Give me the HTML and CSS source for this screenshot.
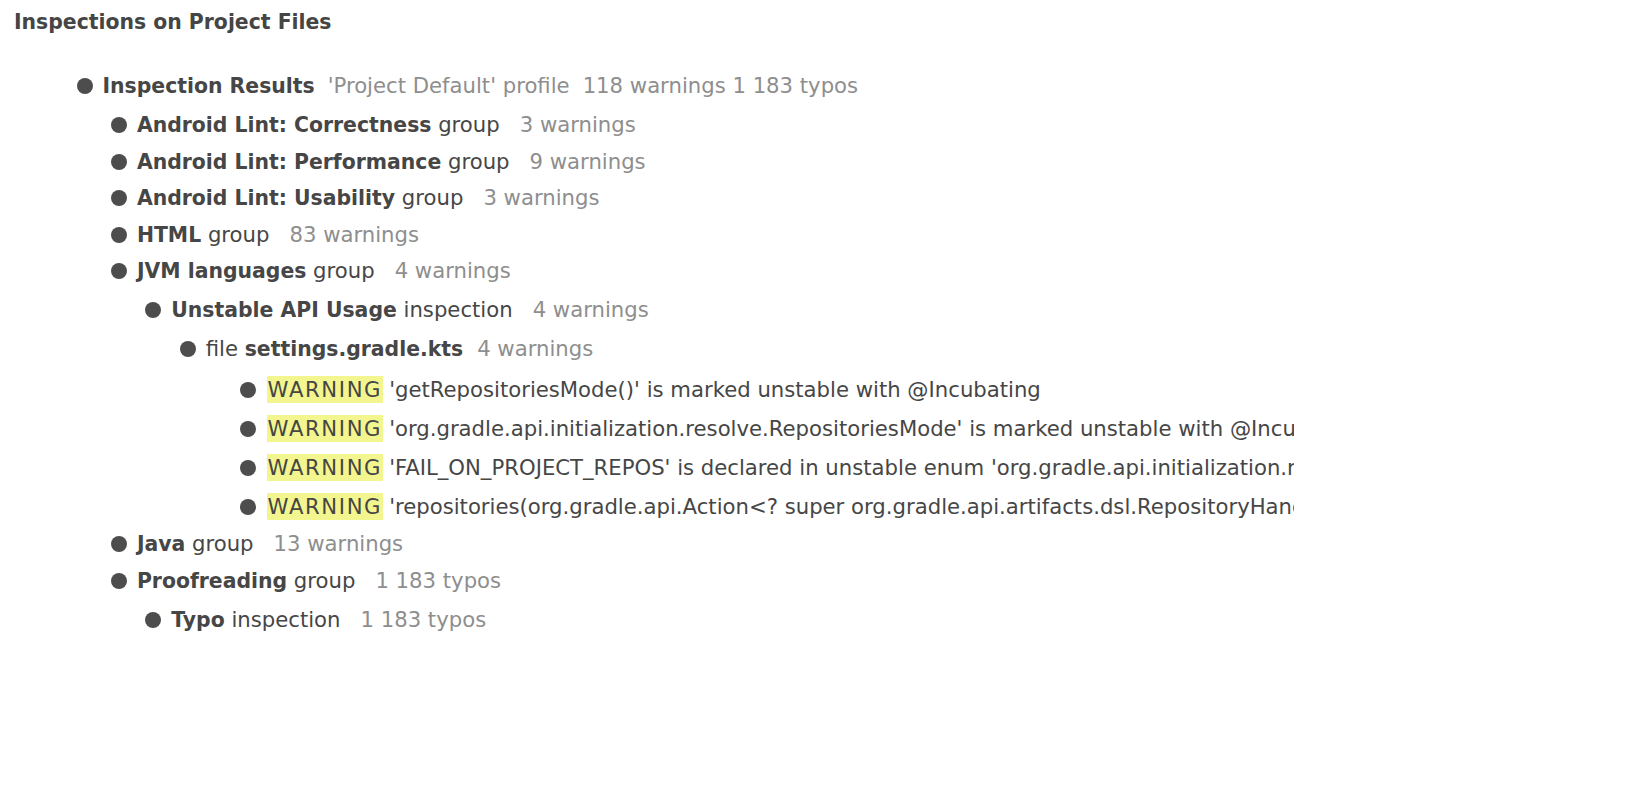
FILE: index.html
```html
<!DOCTYPE html>
<html lang="en">
<head>
<meta charset="utf-8">
<title>Inspections on Project Files</title>
<link rel="stylesheet" href="styles.css">
</head>
<body>
<h1 class="title">Inspections on Project Files</h1>
<ul class="tree">
  <li>
    <div class="row"><span class="dot"></span><span class="name strong">Inspection Results</span><span class="meta meta-root">'Project Default' profile</span><span class="meta meta-root">118 warnings 1 183 typos</span></div>
    <ul class="sub">
      <li><div class="row"><span class="dot"></span><span class="name"><span class="strong">Android Lint: Correctness</span> group</span><span class="meta">3 warnings</span></div></li>
      <li><div class="row"><span class="dot"></span><span class="name"><span class="strong">Android Lint: Performance</span> group</span><span class="meta">9 warnings</span></div></li>
      <li><div class="row"><span class="dot"></span><span class="name"><span class="strong">Android Lint: Usability</span> group</span><span class="meta">3 warnings</span></div></li>
      <li><div class="row"><span class="dot"></span><span class="name"><span class="strong">HTML</span> group</span><span class="meta">83 warnings</span></div></li>
      <li>
        <div class="row"><span class="dot"></span><span class="name"><span class="strong">JVM languages</span> group</span><span class="meta">4 warnings</span></div>
        <ul class="sub">
          <li>
            <div class="row"><span class="dot"></span><span class="name"><span class="strong">Unstable API Usage</span> inspection</span><span class="meta">4 warnings</span></div>
            <ul class="sub">
              <li>
                <div class="row"><span class="dot"></span><span class="name">file <span class="strong">settings.gradle.kts</span></span><span class="meta meta-file">4 warnings</span></div>
                <ul class="sub sub-warn">
                  <li><div class="row row-warn"><span class="dot dot-warn"></span><span class="level">WARNING</span><span class="msg">'getRepositoriesMode()' is marked unstable with @Incubating</span></div></li>
                  <li><div class="row row-warn"><span class="dot dot-warn"></span><span class="level">WARNING</span><span class="msg">'org.gradle.api.initialization.resolve.RepositoriesMode' is marked unstable with @Incubating</span></div></li>
                  <li><div class="row row-warn"><span class="dot dot-warn"></span><span class="level">WARNING</span><span class="msg">'FAIL_ON_PROJECT_REPOS' is declared in unstable enum 'org.gradle.api.initialization.resolve.RepositoriesMode' marked with @Incubating</span></div></li>
                  <li><div class="row row-warn"><span class="dot dot-warn"></span><span class="level">WARNING</span><span class="msg">'repositories(org.gradle.api.Action&lt;? super org.gradle.api.artifacts.dsl.RepositoryHandler&gt;)' is marked unstable with @Incubating</span></div></li>
                </ul>
              </li>
            </ul>
          </li>
        </ul>
      </li>
      <li><div class="row"><span class="dot"></span><span class="name"><span class="strong">Java</span> group</span><span class="meta">13 warnings</span></div></li>
      <li>
        <div class="row"><span class="dot"></span><span class="name"><span class="strong">Proofreading</span> group</span><span class="meta">1 183 typos</span></div>
        <ul class="sub">
          <li><div class="row"><span class="dot"></span><span class="name"><span class="strong">Typo</span> inspection</span><span class="meta">1 183 typos</span></div></li>
        </ul>
      </li>
    </ul>
  </li>
</ul>
</body>
</html>
```
FILE: styles.css
```css
html, body {
  margin: 0;
  padding: 0;
  background: #ffffff;
}

body {
  font-family: "DejaVu Sans", "Liberation Sans", sans-serif;
  font-size: 21.2px;
  line-height: 24px;
  color: #464646;
}

.title {
  margin: 10px 0 0 14px;
  font-size: 20.4px;
  line-height: 24px;
  font-weight: bold;
  color: #454545;
}

ul {
  list-style: none;
  margin: 0;
  padding: 0;
}

.tree {
  margin: 34px 0 0 76.5px;
  width: 1217px;
  overflow: hidden;
}

.sub {
  padding: 2.5px 0 0 34.4px;
}

.sub-warn {
  padding-left: 60.4px;
}

.row {
  display: flex;
  align-items: center;
  height: 36.5px;
  white-space: nowrap;
}

.row-warn {
  height: 39px;
}

.dot {
  flex: none;
  width: 16px;
  height: 16px;
  border-radius: 50%;
  background: #4d4d4d;
  margin-right: 10px;
}

.dot-warn {
  margin-right: 10.5px;
}

.strong {
  font-weight: bold;
  font-size: 20.4px;
}

.meta {
  color: #8e8e8e;
  margin-left: 20px;
}

.meta-root {
  margin-left: 13px;
}

.meta-file {
  margin-left: 14px;
}

.level {
  background: #f3f68e;
  padding: 1.6px 1px;
  letter-spacing: 1.6px;
  color: #464646;
}

.msg {
  margin-left: 6px;
}
```
